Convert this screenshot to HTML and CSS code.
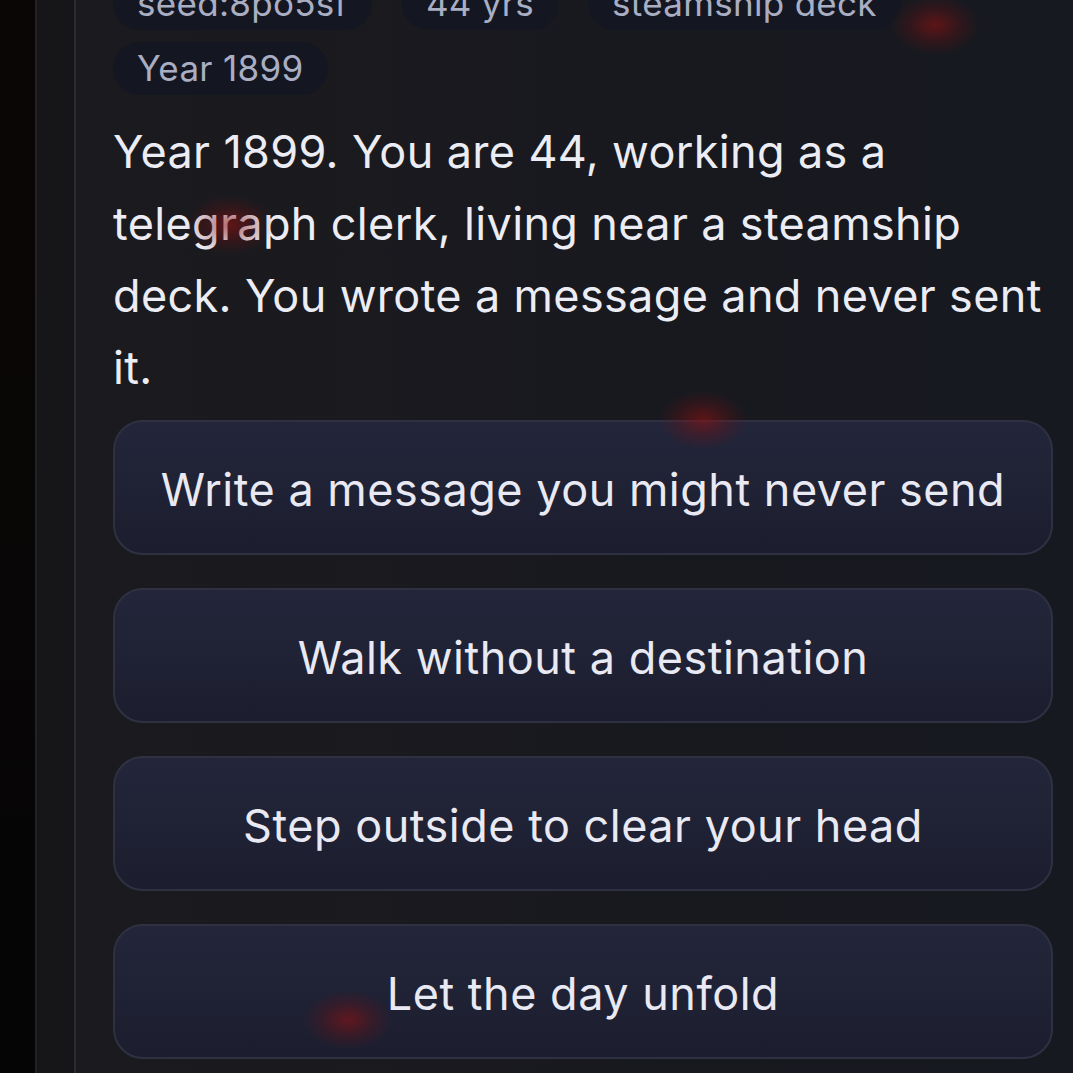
FILE: index.html
```html
<!DOCTYPE html>
<html lang="en">
<head>
    <meta charset="UTF-8">
    <meta name="viewport" content="width=device-width, initial-scale=1.0">
    <title>Another Life</title>
    <link rel="stylesheet" href="styles.css">
</head>
<body>
    <div class="shell">
        <div class="frame">
            <div class="card">
                <div class="tags">
                    <span class="tag">seed:8po5sf</span>
                    <span class="tag">44 yrs</span>
                    <span class="tag">steamship deck</span>
                    <span class="tag">Year 1899</span>
                </div>

                <p class="story">Year 1899. You are 44, working as a telegraph clerk, living near a steamship deck. You wrote a message and never sent it.</p>

                <div class="choices">
                    <button class="choice">Write a message you might never send</button>
                    <button class="choice">Walk without a destination</button>
                    <button class="choice">Step outside to clear your head</button>
                    <button class="choice">Let the day unfold</button>
                </div>
            </div>
        </div>

        <!-- drifting embers -->
        <span class="ember" style="left: 935px; top: 25px;"></span>
        <span class="ember" style="left: 230px; top: 225px;"></span>
        <span class="ember" style="left: 703px; top: 420px;"></span>
        <span class="ember" style="left: 348px; top: 1020px;"></span>
    </div>
</body>
</html>
```

FILE: styles.css
```css
html, body {
    margin: 0;
    height: 100%;
    overflow: hidden;
}
body {
    font-family: Inter, "Noto Sans", sans-serif;
    background: linear-gradient(180deg, #0b0606 0%, #050505 100%);
    color: #ececf4;
}
.shell {
    position: relative;
    height: 100%;
    padding-left: 35px;
}
.frame {
    height: 100%;
    border-left: 2px solid #222226;
    background: #161618;
    padding-left: 37px;
}
.card {
    display: flex;
    flex-direction: column;
    height: 100%;
    border-left: 2px solid #2a2a2f;
    background: linear-gradient(90deg, #1b1a1e 0%, #18191f 60%, #171920 100%);
    padding: 0 20px 0 37px;
}
.tags {
    display: flex;
    flex-wrap: wrap;
    gap: 12px 30px;
    margin-top: -23px;
}
.tag {
    background: #141722;
    color: #a9aec2;
    font-size: 35px;
    letter-spacing: 0.3px;
    line-height: 53px;
    padding: 0 24px;
    border-radius: 27px;
}
.story {
    font-size: 45px;
    line-height: 72px;
    margin: 21px 0 16px;
    color: #ececf4;
    letter-spacing: 0.35px;
}
.choices {
    display: flex;
    flex-direction: column;
    gap: 33px;
}
.choice {
    flex-shrink: 0;
    height: 135px;
    padding-top: 4px;
    border: 2px solid #2f3142;
    border-radius: 30px;
    background: linear-gradient(180deg, #23253a 0%, #1c1e2f 100%);
    color: #e9e9f3;
    font-family: inherit;
    font-size: 45px;
    letter-spacing: 0.5px;
    cursor: pointer;
}
.ember {
    position: absolute;
    width: 90px;
    height: 60px;
    margin: -30px 0 0 -45px;
    border-radius: 50%;
    background: radial-gradient(ellipse at center, rgba(140, 18, 18, 0.6) 0%, rgba(120, 15, 15, 0.25) 40%, rgba(100, 10, 10, 0) 70%);
    pointer-events: none;
}
```
